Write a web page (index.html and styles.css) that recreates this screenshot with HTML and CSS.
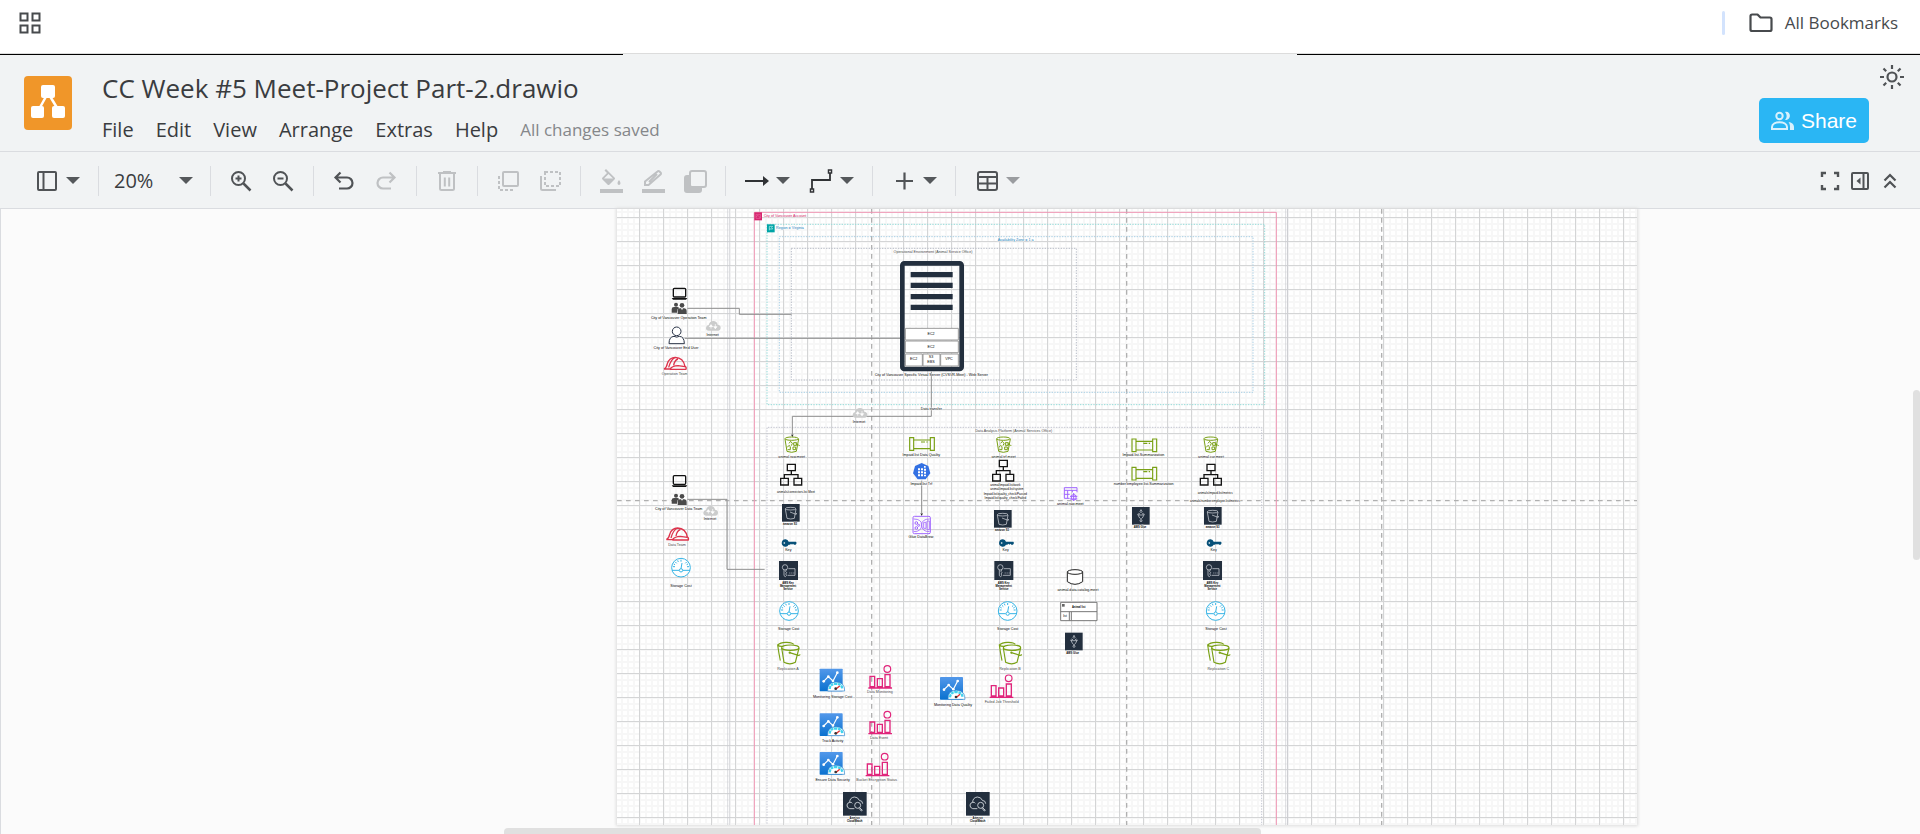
FILE: index.html
```html
<!DOCTYPE html>
<html lang="en">
<head>
<meta charset="utf-8">
<title>CC Week #5 Meet-Project Part-2.drawio</title>
<link rel="stylesheet" href="styles.css">
</head>
<body>
<div class="bookmarks">
  <button class="plain" aria-label="Tab groups"><svg width="22" height="22" viewBox="0 0 22 22" fill="none" stroke="#474a4d" stroke-width="2"><path d="M1.500 1.500h7v7h-7zM13.500 1.500h7v7h-7zM1.500 13.500h7v7h-7zM13.500 13.500h7v7h-7z"/></svg></button>
  <span class="bookmark-divider"></span>
  <button class="plain all-bookmarks"><svg width="24" height="20" viewBox="0 0 24 20" fill="none" stroke="#474a4d" stroke-width="2.200" stroke-linejoin="round"><path d="M1.500 16.500V3.200q0-1.700 1.700-1.700h5.300l3 3h9.300q1.700 0 1.700 1.700v10.300q0 1.500-1.700 1.500H3.200q-1.700 0-1.700-1.500z"/></svg>All Bookmarks</button>
</div>
<div class="edge"><span class="edge-dark"></span><span class="edge-light"></span><span class="edge-dark"></span></div>

<header class="header">
  <svg class="logo" width="48" height="54" viewBox="0 0 48 54"><rect width="48" height="54" rx="4" fill="#f09629"/><path d="M24 17L14 35M24 17l11 18" stroke="#fff" stroke-width="2.500"/><rect x="17" y="9" width="14" height="13" rx="2" fill="#fff"/><rect x="7" y="30" width="13" height="12" rx="2" fill="#fff"/><rect x="28" y="30" width="13" height="12" rx="2" fill="#fff"/></svg>
  <div class="heading">
    <h1 class="title">CC Week #5 Meet-Project Part-2.drawio</h1>
    <nav class="menu">
      <button class="plain">File</button><button class="plain">Edit</button><button class="plain">View</button><button class="plain">Arrange</button><button class="plain">Extras</button><button class="plain">Help</button>
      <span class="status">All changes saved</span>
    </nav>
  </div>
  <button class="share"><svg width="24" height="20" viewBox="0 0 24 20"><path d="M1 18v-2c0-3.500 4-4.800 7.500-4.800S16 12.500 16 16v2z" fill="none" stroke="#d8f1fd" stroke-width="2"/><circle cx="8.500" cy="5" r="3.200" fill="none" stroke="#d8f1fd" stroke-width="2"/><path d="M14 1c6-1.500 7 8 0 8 2.200-2.400 2.200-5.600 0-8zM17.500 11c3 .5 5.500 2 5.500 5v3h-4v-3c0-2-.5-3.700-1.500-5z" fill="#d8f1fd"/></svg>Share</button>
  <button class="plain theme" aria-label="Appearance"><svg width="26" height="26" viewBox="0 0 26 26" fill="none" stroke="#505356" stroke-width="2.200"><circle cx="13" cy="13" r="4.500"/><path d="M13 1v4M13 21v4M1 13h4M21 13h4M4.500 4.500l2.700 2.700M18.800 18.800l2.700 2.700M4.500 21.500l2.700-2.700M18.800 7.200l2.700-2.700"/></svg></button>
</header>

<div class="toolbar">
  <button class="tool pair" aria-label="View"><svg class="ico" viewBox="0 0 24 24" fill="none" stroke="#505356" stroke-width="2"><rect x="3" y="3" width="18" height="18" rx="1"/><path d="M8.500 3v18"/></svg><span class="caret"></span></button>
  <span class="sep"></span>
  <button class="tool zoom">20%<span class="caret"></span></button>
  <span class="sep"></span>
  <button class="tool" aria-label="Zoom in"><svg class="ico" viewBox="0 0 24 24" fill="none" stroke="#505356" stroke-width="2"><circle cx="9.500" cy="9.500" r="6.500"/><path d="M14.500 14.500l7 7" stroke-width="2.500"/><path d="M6.500 9.500h6M9.500 6.500v6"/></svg></button>
  <button class="tool" aria-label="Zoom out"><svg class="ico" viewBox="0 0 24 24" fill="none" stroke="#505356" stroke-width="2"><circle cx="9.500" cy="9.500" r="6.500"/><path d="M14.500 14.500l7 7" stroke-width="2.500"/><path d="M6.500 9.500h6"/></svg></button>
  <span class="sep"></span>
  <button class="tool" aria-label="Undo"><svg class="ico" viewBox="0 0 24 24" fill="none" stroke="#505356" stroke-width="2.200"><path d="M8.500 3.500L3.500 8.500l5 5M4 8.500h11a5.500 5.500 0 0 1 0 11H7"/></svg></button>
  <button class="tool" aria-label="Redo" disabled><svg class="ico" viewBox="0 0 24 24" fill="none" stroke="#bfc1c3" stroke-width="2.200"><path d="M15.500 3.500l5 5-5 5M20 8.500H9a5.500 5.500 0 0 0 0 11h8"/></svg></button>
  <span class="sep"></span>
  <button class="tool" aria-label="Delete" disabled><svg class="ico" viewBox="0 0 24 24" fill="none" stroke="#bfc1c3" stroke-width="2"><path d="M3 4h18M8 3h8M5 5v14.500q0 1.500 1.500 1.500h11q1.500 0 1.500-1.500V5M9.800 8.500v9M14.200 8.500v9"/></svg></button>
  <span class="sep"></span>
  <button class="tool" aria-label="To front" disabled><svg class="ico" viewBox="0 0 24 24" fill="none" stroke="#bfc1c3" stroke-width="2"><rect x="7" y="3" width="15" height="14" rx="1"/><path d="M3 7v14h16" stroke-dasharray="3 2"/></svg></button>
  <button class="tool" aria-label="To back" disabled><svg class="ico" viewBox="0 0 24 24" fill="none" stroke="#bfc1c3" stroke-width="2"><rect x="7" y="3" width="15" height="14" stroke-dasharray="3 2"/><path d="M3 7v12.500q0 1.500 1.500 1.500H18"/></svg></button>
  <span class="sep"></span>
  <button class="tool" aria-label="Fill color" disabled><svg class="ico" viewBox="0 0 24 24" fill="#bfc1c3"><path d="M7 0l8.500 8.500q1 1 0 2L10.500 15.500q-1 1-2 0L3.500 10.500q-1-1 0-2L8 4 5.500 1.500zM9.500 5L5 9.500h9zM20 11c-5 6.500 5 6.500 0 0z" fill-rule="evenodd"/><path d="M1 20h23v4H1z"/></svg></button>
  <button class="tool" aria-label="Line color" disabled><svg class="ico" viewBox="0 0 24 24" fill="none" stroke="#bfc1c3" stroke-width="2"><path d="M4 15.500v-3L16.500 2.500q1-1 2 0l1 1q1 1 0 2L7.500 16H4zM8 13l8-8"/><path d="M1 22h23" stroke-width="4"/></svg></button>
  <button class="tool" aria-label="Shadow" disabled><svg class="ico" viewBox="0 0 24 24"><rect x="1" y="6" width="18" height="18" rx="3" fill="#bfc1c3"/><rect x="7" y="2" width="16" height="16" rx="2" fill="#f1f3f4" stroke="#bfc1c3" stroke-width="2"/></svg></button>
  <span class="sep"></span>
  <button class="tool pair" aria-label="Connection"><svg class="ico" viewBox="0 0 24 24"><path d="M0 12h20" stroke="#303235" stroke-width="2"/><path d="M18 7l6 5-6 5z" fill="#303235"/></svg><span class="caret"></span></button>
  <button class="tool pair" aria-label="Waypoints"><svg class="ico" viewBox="0 0 24 24" fill="none" stroke="#303235" stroke-width="1.800"><path d="M3 20v-9h18V4"/><path d="M1.500 20h3v3h-3zM19.500 1h3v3h-3z" fill="#fff" stroke-width="1.500"/></svg><span class="caret"></span></button>
  <span class="sep"></span>
  <button class="tool pair" aria-label="Insert"><svg class="ico" viewBox="0 0 24 24" stroke="#505356" stroke-width="2.200"><path d="M4 12h17M12.500 3.500v17"/></svg><span class="caret"></span></button>
  <span class="sep"></span>
  <button class="tool pair" aria-label="Table"><svg class="ico" viewBox="0 0 24 24" fill="none" stroke="#505356" stroke-width="2"><rect x="3" y="3" width="19" height="18" rx="2"/><path d="M3 8h19M3 14.500h19M12.500 8v13"/></svg><span class="caret faded"></span></button>
  <span class="spacer"></span>
  <button class="tool narrow" aria-label="Fullscreen"><svg class="ico" viewBox="0 0 24 24" fill="none" stroke="#505356" stroke-width="2.400"><path d="M4 8V4h4M16 4h4v4M20 16v4h-4M8 20H4v-4"/></svg></button>
  <button class="tool narrow" aria-label="Format"><svg class="ico" viewBox="0 0 24 24" fill="none" stroke="#505356" stroke-width="2"><rect x="4" y="4" width="16" height="16" rx="1"/><path d="M15.500 4v16"/><path d="M12.500 8.500v7L8.500 12z" fill="#505356" stroke="none"/></svg></button>
  <button class="tool narrow" aria-label="Collapse"><svg class="ico" viewBox="0 0 24 24" fill="none" stroke="#505356" stroke-width="2.200"><path d="M6.500 11.500L12 6l5.500 5.500M6.500 18.500L12 13l5.500 5.500"/></svg></button>
</div>

<main class="canvas">
  <div class="stage">
    <div class="sheet">
      <svg class="diagram" width="1020" height="616" viewBox="0 0 3060 1848">
        <defs>
          <g id="laptop"><rect x="5" y="2" width="37" height="26" rx="3" fill="none" stroke="#111" stroke-width="4"/><path d="M0 31h47l-4 5H4z" fill="#111"/></g>
          <g id="people" fill="#4a4a4a"><circle cx="13" cy="6" r="6"/><circle cx="31" cy="8" r="7"/><path d="M0 30V20q0-7 7-7h10q4 0 5 3-6 4-6 11v3zM18 34V24q0-7 7-7h12q8 0 8 8v9zM28 17l3 6 3-6z"/></g>
          <g id="user" fill="#fff" stroke="#2a3447" stroke-width="3"><circle cx="25" cy="14" r="13"/><path d="M2 51q0-21 15-22 8 5 16 0 15 1 15 22z"/></g>
          <g id="hat" fill="none" stroke="#dd344c" stroke-width="4" stroke-linejoin="round"><path d="M2 37Q10 33 12 21 18 2 36 2 60 3 65 29q5 2 3 9H20M2 37h18q8-10 24-10l21 3M16 32Q22 8 36 2M31 26Q34 10 44 7"/></g>
          <g id="cloud"><path d="M9 29Q0 28 1 20q1-7 8-8 3-12 14-12 11 0 13 11 9 1 9 9t-8 9z" fill="#cbcccc"/><path d="M16 23V11l-5 6h10l-5-6M29 9v14l-5-6h10l-5 6" fill="#fff" stroke="#fff" stroke-width="2"/></g>
          <g id="bin" fill="none" stroke="#7aa116" stroke-width="3"><ellipse cx="22" cy="6" rx="20" ry="5"/><path d="M2 7l6 37q14 6 28 0l7-37M10 39h8v-9l-4-4-5 6M14 20l5-6 5 6-3 7M28 18h9v8h-9zM26 31h8v8h-8zM34 22q11 2 12 6" stroke-width="3"/></g>
          <g id="tree" fill="none" stroke="#151515" stroke-width="4"><path d="M22 2h24v19H22zM2 44h23v20H2zM42 44h23v20H42zM34 21v11M13 44V33h41v11"/></g>
          <g id="s3"><rect width="53" height="53" fill="#232f3e"/><g fill="none" stroke="#dfe3e8" stroke-width="2"><ellipse cx="26" cy="14" rx="16" ry="4"/><path d="M10 15l5 28q11 4 22 0l5-28M24 24l18 7q4 0 0-4"/></g></g>
          <g id="key"><path d="M12 0a11 11 0 1 0 9 16h4l3-3 3 3 3-3 3 3h5l3-5-2-4H21A11 11 0 0 0 12 0z" fill="#075078"/><circle cx="8" cy="11" r="2.500" fill="#fff"/></g>
          <g id="kms"><rect width="57" height="57" fill="#232f3e"/><g fill="none" stroke="#dfe3e8" stroke-width="2"><circle cx="18" cy="19" r="8"/><path d="M15 27v17l4 3 4-4-3-4 3-4-3-3 2-6M28 23h20v20H26M31 36h3M37 36h3M43 36h3"/></g></g>
          <g id="gauge"><circle cx="30" cy="30" r="28" fill="#fff" fill-opacity=".8" stroke="#36b4e5" stroke-width="3"/><path d="M30 6v6M13 13l4 4M6 27h6M48 27h6M47 13l-4 4M20 8l2 5M8 19l4 2M51 19l-4 2M3 38h21M36 38h21M30 33l3-17" stroke="#36b4e5" stroke-width="3" fill="none"/><circle cx="30" cy="38" r="5" fill="#fff" stroke="#36b4e5" stroke-width="3"/></g>
          <g id="buckets" fill="none" stroke="#7aa116" stroke-width="3.500"><path d="M10 57Q5 32 2 10 10 1 30 2q16 1 20 6M2 10q5 5 16 4"/><ellipse cx="40" cy="18" rx="26" ry="8"/><path d="M14 19l7 43q18 9 34 0l11-43M38 33l26 8q6 0 4-3"/><circle cx="38" cy="33" r="1.500"/></g>
          <linearGradient id="azure" x1="0" y1="0" x2="0" y2="1"><stop offset="0" stop-color="#5398ea"/><stop offset="1" stop-color="#0971cf"/></linearGradient>
          <g id="monitor"><rect width="69" height="68" rx="2" fill="url(#azure)"/><path d="M12 38l14-14 14 13L53 12" fill="none" stroke="#fff" stroke-width="3.500"/><g fill="#fff"><circle cx="12" cy="38" r="4"/><circle cx="26" cy="24" r="4"/><circle cx="40" cy="37" r="4"/><circle cx="53" cy="12" r="4"/></g><path d="M24 67q-2-26 25-27 27 1 26 27z" fill="#fff" stroke="#2b85d0" stroke-width="2"/><path d="M30 61q1-16 19-16 18 1 19 16" fill="none" stroke="#41d3ee" stroke-width="7" stroke-dasharray="9 2"/><path d="M48 62l12-10" stroke="#e62c2c" stroke-width="4"/><circle cx="48" cy="60" r="4" fill="#333"/></g>
          <g id="bars" fill="none" stroke="#e0257b" stroke-width="4"><path d="M5 34h14v31H5zM27 41h15v24H27zM50 29h15v36H50zM0 69h71"/><circle cx="57" cy="12" r="10" stroke-width="3.500"/></g>
          <g id="watch"><rect width="71" height="71" fill="#232f3e"/><g fill="none" stroke="#dfe3e8" stroke-width="2.500"><path d="M34 50H20q-9-3-8-11 1-7 8-8 0-14 14-16 11 0 15 10 10 1 10 10M20 31q6-1 8 3"/><circle cx="44" cy="40" r="9"/><path d="M50 47l8 8-3 2-7-8"/></g></g>
          <g id="glue"><rect width="53" height="53" fill="#232f3e"/><g fill="none" stroke="#dfe3e8" stroke-width="2"><path d="M27 8l-3 6 3 3 3-3zM19 19l5 2M35 19l-5 2M17 22l4 2h12l4-2-6 11-2 2h-4l-2-2z"/><circle cx="27" cy="41" r="3"/></g></g>
          <g id="spool" fill="none" stroke="#7aa116" stroke-width="3.500"><path d="M2 2h12v38H2zM64 2h12v38H64zM14 9h50v26H14zM36 15h12M52 15h4"/></g>
          <g id="arrowhead"><path d="M-4-7L0-4 4-7 0 2z" fill="#222"/></g>
        </defs>

        <path d="M764 0v1848M1529 0v1848M2294 0v1848M0 875h3060" fill="none" stroke="#b0b0b0" stroke-width="4" stroke-dasharray="14 13"/>
        <path d="M332 0v1848M338 0v1848M2006 0v1848M2012 0v1848" stroke="#c8cad0" stroke-width="2"/>
        <g fill="none" stroke-width="3">
          <path d="M412 1860V10h1566v1850" stroke="#ee94b3"/>
          <g stroke-dasharray="4 4">
            <path d="M450 46h1493v541H450z" stroke="#94dcda"/>
            <path d="M487 83h1421v467H487z" stroke="#a9d0e6"/>
            <path d="M523 118h855v395H523z" stroke="#b9bdc8"/>
            <path d="M450 1860V655h1484v1205" stroke="#c4c6d2"/>
          </g>
        </g>
        <rect x="412" y="10" width="23" height="24" fill="#d6246e"/><path d="M417 16h13v12h-13zM417 24l6-5 7 8" fill="none" stroke="#e8689f" stroke-width="2"/>
        <rect x="450" y="46" width="23" height="24" fill="#00a4a6"/><path d="M457 64V52h10l-3 4 3 4h-10" fill="none" stroke="#c2f0f0" stroke-width="2"/>

        <g fill="none" stroke="#8e8e8e" stroke-width="3">
          <path d="M211 298h156v18h157M203 388h646M943 488v134H526v58M211 871h119v210h113M914 815v102"/>
        </g>
        <use href="#arrowhead" x="526" y="683"/><use href="#arrowhead" x="914" y="919"/>

        <rect x="856" y="163" width="178" height="317" rx="6" fill="none" stroke="#232f3e" stroke-width="14"/>
        <path d="M881 189h126v16H881zM881 221h126v16H881zM881 255h126v16H881zM881 287h126v16H881z" fill="#232f3e"/>
        <path d="M865 358h159v35H865zM865 396h159v35H865zM865 435h51v36h-51zM918 435h51v36h-51zM971 435h53v36h-53z" fill="#fff" stroke="#999" stroke-width="3"/>

        <use href="#laptop" x="164" y="236"/><use href="#people" x="164" y="281"/><use href="#user" x="154" y="353"/><use href="#hat" x="139" y="443"/>
        <use href="#laptop" x="164" y="798"/><use href="#people" x="164" y="854"/><use href="#hat" x="146" y="955"/><use href="#gauge" x="162" y="1046"/>
        <use href="#cloud" x="266" y="336"/><use href="#cloud" x="706" y="597"/><use href="#cloud" x="258" y="891"/>

        <use href="#bin" x="502" y="683"/><use href="#tree" x="489" y="764"/><use href="#s3" x="495" y="885"/><use href="#key" x="494" y="991"/><use href="#kms" x="486" y="1056"/><use href="#gauge" x="486" y="1176"/><use href="#buckets" x="480" y="1298"/>
        <use href="#bin" x="1137" y="683"/><use href="#tree" x="1125" y="752"/><use href="#s3" x="1131" y="903"/><use href="#key" x="1146" y="991"/><use href="#kms" x="1132" y="1056"/><use href="#gauge" x="1142" y="1176"/><use href="#buckets" x="1145" y="1298"/>
        <use href="#bin" x="1759" y="683"/><use href="#tree" x="1748" y="764"/><use href="#s3" x="1761" y="894"/><use href="#key" x="1769" y="991"/><use href="#kms" x="1758" y="1056"/><use href="#gauge" x="1766" y="1176"/><use href="#buckets" x="1770" y="1298"/>

        <use href="#spool" x="876" y="684"/><use href="#spool" x="1543" y="688"/><use href="#spool" x="1543" y="773"/>
        <path d="M914 762l20 9 6 22-14 18h-24l-14-18 6-22z" fill="#3371e3"/>
        <path d="M903 778h6v6h-6zM912 778h6v6h-6zM921 771h5v5h-5zM903 787h6v6h-6zM912 787h6v6h-6zM921 779h6v6h-6zM903 796h6v6h-6zM912 796h6v6h-6zM921 788h6v6h-6zM921 797h6v5h-6z" fill="#fff"/>
        <g fill="none" stroke="#a166ff" stroke-width="3"><rect x="888" y="922" width="52" height="52" rx="4"/><path d="M890 930q24 0 24 18 0 20 24 20M890 968q24 0 24-20 0-18 24-18M920 940h7v18h-7zM930 936h7v26h-7z" stroke-width="2.500"/><circle cx="898" cy="942" r="4"/><circle cx="905" cy="949" r="3"/><circle cx="898" cy="957" r="4"/></g>
        <g fill="none" stroke="#a166ff" stroke-width="3"><path d="M1342 836h38v14M1342 836v32h16M1342 844h38M1352 844v24M1342 856h16M1366 844v6M1363 860q7-8 14 0v10q-7 8-14 0zM1359 862h22M1359 870h22M1370 852v24"/></g>
        <path d="M1351 1088v30q23 16 46 0v-30" fill="#fff" stroke="#222" stroke-width="3"/><ellipse cx="1374" cy="1089" rx="23" ry="7" fill="#fff" stroke="#222" stroke-width="3"/>
        <path d="M1331 1180h109v55h-109zM1331 1208h109M1357 1208v27M1363 1208v27" fill="#fff" stroke="#777" stroke-width="3"/><path d="M1335 1185h8v8h-8z" fill="#666"/>
        <use href="#glue" x="1545" y="894"/><use href="#glue" x="1344" y="1271"/>

        <use href="#monitor" x="608" y="1379"/><use href="#monitor" x="608" y="1513"/><use href="#monitor" x="608" y="1629"/><use href="#monitor" x="969" y="1404"/>
        <use href="#bars" x="754" y="1368"/><use href="#bars" x="754" y="1505"/><use href="#bars" x="746" y="1631"/><use href="#bars" x="1118" y="1396"/>
        <use href="#watch" x="678" y="1749"/><use href="#watch" x="1047" y="1749"/>

        <g class="label">
          <text x="185" y="330">City of Vancouver Operation Team</text>
          <text x="177" y="420">City of Vancouver End User</text>
          <text class="muted" x="173" y="497">Operation Team</text>
          <text x="287" y="380">Internet</text><text x="726" y="641">Internet</text><text x="279" y="932">Internet</text>
          <text class="pink start" x="440" y="24">City of Vancouver Account</text>
          <text class="teal start" x="477" y="60">Region = Virginia</text>
          <text class="teal" x="1196" y="95">Availability Zone = 1 a</text>
          <text class="muted" x="948" y="131">Operational Environment (Animal Service Office)</text>
          <text x="943" y="500">City of Vancouver Specific Virtual Server (CVSVR-Meet) - Web Server</text>
          <text x="943" y="602">Data transfer</text>
          <text x="942" y="379">EC2</text><text x="942" y="417">EC2</text><text x="890" y="454">EC2</text><text x="942" y="448">S3</text><text x="942" y="462">EBS</text><text x="996" y="454">VPC</text>
          <text class="muted" x="1190" y="669">Data Analysis Platform (Animal Services Office)</text>
          <text x="185" y="902">City of Vancouver Data Team</text>
          <text class="muted" x="180" y="1010">Data Team</text>
          <text x="192" y="1133">Storage Cost</text>
          <text x="524" y="746">animal.raw.meet</text><text x="1160" y="746">animal.trf.meet</text><text x="1782" y="746">animal.cur.meet</text>
          <text class="small" x="537" y="851">animals/connectors.list.Meet</text>
          <text class="strong" x="519" y="948">amazon S3</text><text class="strong" x="1155" y="966">amazon S3</text><text class="strong" x="1787" y="957">amazon S3</text>
          <text x="514" y="1025">Key</text><text x="1166" y="1025">Key</text><text x="1790" y="1025">Key</text>
          <text x="515" y="1262">Storage Cost</text><text x="1172" y="1262">Storage Cost</text><text x="1797" y="1262">Storage Cost</text>
          <text class="muted" x="513" y="1382">Replication A</text><text class="muted" x="1179" y="1382">Replication B</text><text class="muted" x="1804" y="1382">Replication C</text>
          <text x="913" y="740">Impaid.list Data Quality</text><text x="913" y="827">Impaid.list Trf</text><text x="912" y="986">Glue DataBrew</text>
          <text class="small" x="1165" y="831">animal/impaid.list/work</text><text class="small" x="1170" y="843">animal/impaid.list/system</text>
          <text class="small" x="1165" y="858">Impaid.list/quality_check/Passed</text><text class="small" x="1165" y="870">Impaid.list/quality_check/Failed</text>
          <text x="1579" y="740">Impaid.list.Summarization</text><text x="1580" y="827">number.employee.list.Summarization</text>
          <text x="1360" y="887">animal.raw.meet</text>
          <text class="small" x="1795" y="854">animals/impaid.list/metrics</text><text class="small" x="1794" y="879">animals/number.employee.list/metrics</text>
          <text class="strong" x="1569" y="957">AWS Glue</text><text class="strong" x="1367" y="1335">AWS Glue</text>
          <text x="1383" y="1145">animal.data.catalog.meet</text>
          <text class="strong" x="1385" y="1198">Animal list</text><text class="small" x="1344" y="1224">list</text>
          <text x="647" y="1466">Monitoring Storage Cost</text><text class="muted" x="789" y="1451">Data Monitoring</text>
          <text x="647" y="1598">Track Activity</text><text class="muted" x="786" y="1589">Data Event</text>
          <text x="647" y="1715">Ensure Data Security</text><text class="muted" x="779" y="1715">Bucket Encryption Status</text>
          <text x="1008" y="1490">Monitoring Data Quality</text><text class="muted" x="1154" y="1481">Failed Job Threshold</text>
          <g class="strong"><text x="713" y="1830">Amazon</text><text x="713" y="1839">CloudWatch</text><text x="1082" y="1830">Amazon</text><text x="1082" y="1839">CloudWatch</text></g>
          <g class="strong"><text x="513" y="1125">AWS Key</text><text x="513" y="1134">Management</text><text x="513" y="1143">Service</text><text x="1160" y="1125">AWS Key</text><text x="1160" y="1134">Management</text><text x="1160" y="1143">Service</text><text x="1786" y="1125">AWS Key</text><text x="1786" y="1134">Management</text><text x="1786" y="1143">Service</text></g>
        </g>
      </svg>
    </div>
    <div class="track-v"><span class="thumb-v"></span></div>
  </div>
  <div class="track-h"><span class="thumb-h"></span></div>
</main>
</body>
</html>
```
FILE: styles.css
```css
* { box-sizing: border-box; }
body {
  margin: 0;
  height: 100vh;
  display: flex;
  flex-direction: column;
  overflow: hidden;
  background: #fff;
  color: #3a3c3f;
  font-family: "Open Sans", "Noto Sans", sans-serif;
}
button { font: inherit; color: inherit; }
.plain { border: 0; padding: 0; background: none; display: flex; align-items: center; }

.bookmarks { height: 53px; padding: 0 22px 8px 19px; display: flex; align-items: center; flex: none; }
.bookmark-divider { width: 3px; height: 24px; margin-left: auto; margin-right: 24px; background: #d3e3fd; border-radius: 2px; }
.all-bookmarks { gap: 12px; font-size: 17px; color: #474a4d; }

.edge { height: 2px; display: flex; flex: none; border-top: 1px solid #dcdcdc; }
.edge-dark { flex: 623; background: #000; }
.edge-light { flex: 675; background: #f1f3f4; }

.header {
  flex: none;
  display: flex;
  align-items: flex-start;
  height: 97px;
  padding: 0 15px 0 24px;
  background: #f1f3f4;
  border-bottom: 1px solid #dadce0;
}
.logo { margin-top: 21px; flex: none; }
.heading { margin-left: 30px; flex: 1; padding-top: 15px; }
.title { margin: 0; font-size: 26px; line-height: 36px; font-weight: 400; white-space: nowrap; }
.menu { display: flex; align-items: center; gap: 22px; margin-top: 8px; font-size: 20px; line-height: 32px; }
.status { font-size: 17px; color: #85878a; }
.share {
  display: flex;
  align-items: center;
  gap: 6px;
  height: 45px;
  margin-top: 43px;
  padding: 0 12px;
  border: 0;
  border-radius: 5px;
  background: #2ab6f4;
  color: #fff;
  font: 500 21px "Liberation Sans", Arial, sans-serif;
}
.theme { margin: 9px 0 0 10px; }

.toolbar {
  flex: none;
  display: flex;
  align-items: center;
  height: 57px;
  padding: 1px 15px 0 25px;
  background: #f1f3f4;
  border-bottom: 1px solid #dadce0;
}
.tool { display: flex; align-items: center; justify-content: center; width: 42px; height: 42px; padding: 0; border: 0; background: none; flex: none; }
.narrow { width: 30px; }
.ico { width: 24px; height: 24px; flex: none; }
.pair { width: 64px; justify-content: space-between; padding: 0 9px 0 10px; }
.zoom { width: 93px; justify-content: space-between; padding: 0 8px 0 6px; font-size: 20px; }
.caret { width: 14px; height: 7px; background: #55585b; clip-path: polygon(0 0, 100% 0, 50% 100%); }
.faded { background: #9a9c9f; }
.sep { width: 1px; height: 30px; margin: 0 9px; background: #dadce0; flex: none; }
.spacer { flex: 1; }

.canvas { flex: 1; min-height: 0; display: flex; flex-direction: column; background: #fbfbfb; border-left: 1px solid #dadce0; }
.stage { flex: 1; min-height: 0; display: grid; grid-template-columns: 616fr 1020px 276fr 7px; }
.sheet {
  grid-column: 2;
  overflow: hidden;
  box-shadow: 0 0 3px 1px #dcdcdc;
  background-color: #fff;
  background-image:
    linear-gradient(90deg, #d4d5d6 1px, transparent 1px),
    linear-gradient(#d4d5d6 1px, transparent 1px),
    linear-gradient(90deg, #f7f7f7 2px, transparent 2px),
    linear-gradient(#f7f7f7 2px, transparent 2px);
  background-size: 24px 24px, 24px 24px, 6px 6px, 6px 6px;
  background-position: 22px 8px;
}
.diagram { display: block; }
.track-v { grid-column: 4; display: flex; flex-direction: column; padding-top: 181px; }
.thumb-v { height: 170px; border-radius: 4px; background: #e0e0e0; }
.track-h { flex: none; height: 9px; padding: 3px 0 0; display: flex; }
.thumb-h { width: 757px; margin-left: 503px; border-radius: 4px 4px 0 0; background: #e0e0e0; }

.label { font: 11px "Liberation Sans", Arial, sans-serif; text-anchor: middle; fill: #000; stroke: #fff; stroke-width: 2px; paint-order: stroke; }
.muted { fill: #444; }
.pink { fill: #cd2264; }
.teal { fill: #147eba; }
.start { text-anchor: start; }
.small { font-size: 9px; }
.strong { font-size: 8px; font-weight: 700; }
```
